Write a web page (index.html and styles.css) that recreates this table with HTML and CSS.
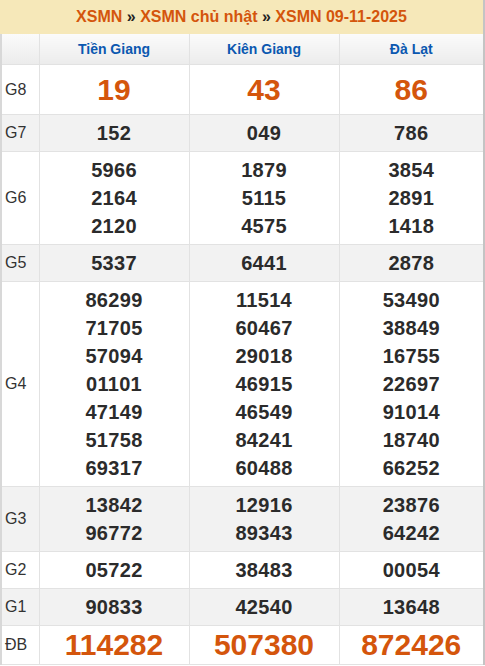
FILE: index.html
```html
<!DOCTYPE html>
<html lang="vi">
<head>
<meta charset="utf-8">
<title>XSMN chủ nhật 09-11-2025</title>
<link rel="stylesheet" href="styles.css">
</head>
<body>
<div class="wrap">
  <div class="title"><a>XSMN</a> <span class="sep">»</span> <a>XSMN chủ nhật</a> <span class="sep">»</span> <a>XSMN 09-11-2025</a></div>
  <table class="kq">
    <colgroup><col class="c0"><col class="c1"><col class="c2"><col class="c3"></colgroup>
    <thead>
      <tr class="prov"><th></th><th>Tiền Giang</th><th>Kiên Giang</th><th>Đà Lạt</th></tr>
    </thead>
    <tbody>
      <tr class="g8"><td class="lbl">G8</td><td class="big">19</td><td class="big">43</td><td class="big">86</td></tr>
      <tr class="alt"><td class="lbl">G7</td><td>152</td><td>049</td><td>786</td></tr>
      <tr><td class="lbl">G6</td><td>5966<br>2164<br>2120</td><td>1879<br>5115<br>4575</td><td>3854<br>2891<br>1418</td></tr>
      <tr class="alt"><td class="lbl">G5</td><td>5337</td><td>6441</td><td>2878</td></tr>
      <tr><td class="lbl">G4</td><td>86299<br>71705<br>57094<br>01101<br>47149<br>51758<br>69317</td><td>11514<br>60467<br>29018<br>46915<br>46549<br>84241<br>60488</td><td>53490<br>38849<br>16755<br>22697<br>91014<br>18740<br>66252</td></tr>
      <tr class="alt"><td class="lbl">G3</td><td>13842<br>96772</td><td>12916<br>89343</td><td>23876<br>64242</td></tr>
      <tr><td class="lbl">G2</td><td>05722</td><td>38483</td><td>00054</td></tr>
      <tr class="alt"><td class="lbl">G1</td><td>90833</td><td>42540</td><td>13648</td></tr>
      <tr class="db"><td class="lbl">ĐB</td><td class="big">114282</td><td class="big">507380</td><td class="big">872426</td></tr>
    </tbody>
  </table>
</div>
</body>
</html>
```
FILE: styles.css
```css
html, body {
  margin: 0;
  padding: 0;
  background: #fff;
}
body {
  font-family: "Liberation Sans", Arial, sans-serif;
  color: #333;
}
.wrap {
  width: 485px;
  box-sizing: border-box;
  border-right: 2px solid #c4c4c4;
}
.title {
  height: 34px;
  line-height: 34px;
  background: #f6e8b9;
  text-align: center;
  font-size: 16px;
  font-weight: bold;
  color: #d4550c;
}
.title a { color: #d4550c; }
.title .sep { color: #222; }
.kq {
  width: 100%;
  border-collapse: collapse;
  table-layout: fixed;
  border-left: 2px solid #d8d8d8;
  border-bottom: 1px solid #d8d8d8;
}
.c0 { width: 38px; }
.c1 { width: 150px; }
.c2 { width: 150px; }
.kq th, .kq td {
  border: 1px solid #e2e2e2;
  padding: 4px 0;
  text-align: center;
}
.kq tr:first-child th { border-top: none; }
.kq th:last-child, .kq td:last-child { border-right: none; }
.kq th:first-child, .kq td:first-child { border-left: none; }
.prov th {
  background: linear-gradient(#fbfbfb, #ececec);
  color: #0b58b0;
  font-size: 14px;
  font-weight: bold;
  line-height: 22px;
}
.kq td {
  font-size: 20px;
  font-weight: bold;
  line-height: 28px;
  color: #2b2b2b;
  letter-spacing: 0.3px;
}
.kq td.lbl {
  text-align: left;
  padding-left: 3px;
  font-size: 16px;
  font-weight: normal;
  color: #333;
  letter-spacing: 0;
}
.kq tr.alt td { background: #f2f2f2; }
.kq td.big {
  font-size: 30px;
  color: #d4550c;
  letter-spacing: 0;
}
.g8 td { line-height: 41px; }
.db td { line-height: 30px; }
```
